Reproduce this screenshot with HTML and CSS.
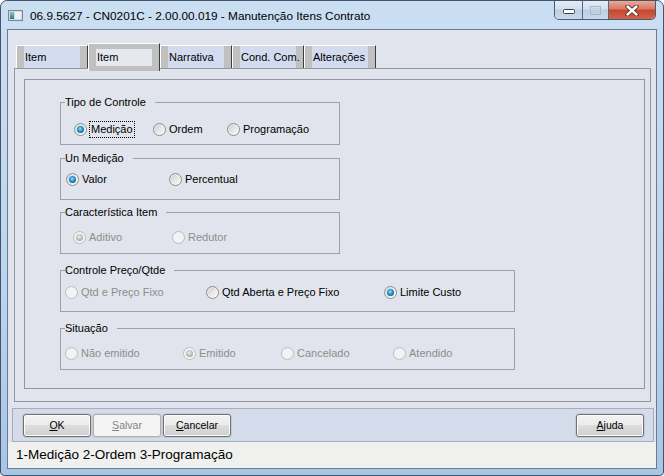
FILE: index.html
```html
<!DOCTYPE html>
<html lang="pt">
<head>
  <meta charset="UTF-8">
  <title>Manutenção Itens Contrato</title>
  <link rel="stylesheet" href="styles.css">
</head>
<body>
  <div class="window">
    <div class="titlebar">
      <svg class="app-icon" width="16" height="16" viewBox="0 0 16 16">
        <defs>
          <linearGradient id="teal" x1="0" y1="0" x2="0" y2="1">
            <stop offset="0" stop-color="#7fd0b8"/>
            <stop offset="1" stop-color="#1f7f86"/>
          </linearGradient>
        </defs>
        <rect x="0.5" y="2.5" width="14" height="10" fill="#d4d8dd" stroke="#7d8793"/>
        <rect x="2" y="4" width="4" height="7" fill="url(#teal)"/>
        <rect x="7" y="4" width="6" height="7" fill="#eef0f2"/>
      </svg>
      <span class="title">06.9.5627 - CN0201C - 2.00.00.019 - Manutenção Itens Contrato</span>
      <div class="caption">
        <span class="cap cap-min">
          <svg width="12" height="5" viewBox="0 0 12 5"><rect x="0.5" y="0.5" width="11" height="4" rx="1" fill="#fff" stroke="#33404f"/></svg>
        </span>
        <span class="cap cap-max">
          <svg width="11" height="9" viewBox="0 0 11 9"><rect x="0.5" y="0.5" width="10" height="8" fill="none" stroke="#a7b6c8"/><rect x="2.5" y="2.5" width="6" height="4" fill="none" stroke="#c3cfdc"/></svg>
        </span>
        <span class="cap cap-close">
          <svg width="14" height="11" viewBox="0 0 14 11">
            <path d="M2.5 1.5 L11.5 9.5 M11.5 1.5 L2.5 9.5" stroke="#4a2a24" stroke-width="4.2" stroke-linecap="round"/>
            <path d="M2.5 1.5 L11.5 9.5 M11.5 1.5 L2.5 9.5" stroke="#fff" stroke-width="2.4" stroke-linecap="round"/>
          </svg>
        </span>
      </div>
    </div>

    <div class="client">
      <div class="tabs">
        <div class="tab">Item</div>
        <div class="tab active">Item</div>
        <div class="tab">Narrativa</div>
        <div class="tab">Cond. Com.</div>
        <div class="tab">Alterações</div>
      </div>

      <div class="panel">
        <div class="page">
          <fieldset class="group g-tipo">
            <legend>Tipo de Controle</legend>
            <div class="options">
              <label class="opt"><span class="radio checked"></span><span class="focus">Medição</span></label>
              <label class="opt"><span class="radio"></span>Ordem</label>
              <label class="opt"><span class="radio"></span>Programação</label>
            </div>
          </fieldset>

          <fieldset class="group g-medicao">
            <legend>Un Medição</legend>
            <div class="options">
              <label class="opt"><span class="radio checked"></span>Valor</label>
              <label class="opt"><span class="radio"></span>Percentual</label>
            </div>
          </fieldset>

          <fieldset class="group g-carac">
            <legend>Característica Item</legend>
            <div class="options">
              <label class="opt disabled"><span class="radio checked"></span>Aditivo</label>
              <label class="opt disabled"><span class="radio"></span>Redutor</label>
            </div>
          </fieldset>

          <fieldset class="group wide g-preco">
            <legend>Controle Preço/Qtde</legend>
            <div class="options">
              <label class="opt disabled"><span class="radio"></span>Qtd e Preço Fixo</label>
              <label class="opt"><span class="radio"></span>Qtd Aberta e Preço Fixo</label>
              <label class="opt"><span class="radio checked"></span>Limite Custo</label>
            </div>
          </fieldset>

          <fieldset class="group wide g-situacao">
            <legend>Situação</legend>
            <div class="options">
              <label class="opt disabled"><span class="radio"></span>Não emitido</label>
              <label class="opt disabled"><span class="radio checked"></span>Emitido</label>
              <label class="opt disabled"><span class="radio"></span>Cancelado</label>
              <label class="opt disabled"><span class="radio"></span>Atendido</label>
            </div>
          </fieldset>
        </div>
      </div>

      <div class="button-bar">
        <button class="btn"><u>O</u>K</button>
        <button class="btn" disabled><u>S</u>alvar</button>
        <button class="btn"><u>C</u>ancelar</button>
        <button class="btn btn-right"><u>A</u>juda</button>
      </div>

      <div class="status">1-Medição 2-Ordem 3-Programação</div>
    </div>
  </div>
</body>
</html>
```

FILE: styles.css
```css
* {
  box-sizing: border-box;
}

body {
  margin: 0;
  width: 664px;
  height: 476px;
  overflow: hidden;
  font-family: "Liberation Sans", Arial, sans-serif;
  font-size: 11px;
  color: #000;
}

/* window frame */
.window {
  width: 664px;
  height: 476px;
  border: 1px solid #43546a;
  border-radius: 7px 7px 4px 4px;
  background: linear-gradient(#cbdff3, #bed5ee 55%, #a9c5e6);
  display: flex;
  flex-direction: column;
}

.titlebar {
  height: 28px;
  flex-shrink: 0;
  display: flex;
  align-items: flex-start;
}

.app-icon {
  margin: 7px 0 0 7px;
}

.title {
  margin: 8px 0 0 6px;
  font-size: 11.8px;
  line-height: 14px;
  white-space: nowrap;
}

.caption {
  margin-left: auto;
  margin-right: 7px;
  display: flex;
  height: 19px;
  border: 1px solid #4a5b70;
  border-top: none;
  border-radius: 0 0 5px 5px;
  overflow: hidden;
}

.cap {
  display: flex;
  align-items: center;
  justify-content: center;
  height: 100%;
  background: linear-gradient(#e4edf7 0%, #d1deec 45%, #bccee3 50%, #c9d9eb 100%);
}

.cap + .cap {
  border-left: 1px solid #56677c;
}

.cap-min {
  width: 27px;
  padding-top: 3px;
}

.cap-max {
  width: 26px;
}

.cap-close {
  width: 47px;
  background: linear-gradient(#e9a996 0%, #d87862 45%, #c4472d 50%, #d3644a 100%);
}

/* client area */
.client {
  margin: 0 6px;
  height: 440px;
  border: 1px solid #6b7c92;
  background: #e1e4ec;
  display: flex;
  flex-direction: column;
}

.tabs {
  display: flex;
  align-items: flex-end;
  height: 25px;
  margin: 13px 0 0 8px;
}

.tab {
  width: 72px;
  height: 23px;
  padding: 0 0 0 8px;
  border-top: 1px solid #fff;
  border-left: 1px solid #fff;
  border-right: 1px solid #3c3c3c;
  background: #d3dbef;
  box-shadow: inset 7px 0 #c0c0c0, inset -7px 0 #c0c0c0;
  line-height: 22px;
  white-space: nowrap;
}

.tab.active {
  height: 28px;
  margin-bottom: -3px;
  padding-top: 7px;
  position: relative;
  z-index: 1;
  background: #e5e8ef;
  box-shadow: inset 7px 5px #c0c0c0, inset -7px -5px #c0c0c0;
  line-height: 13px;
}

.panel {
  height: 334px;
  margin: 0 5px 0 6px;
  padding: 10px 5px 12px 9px;
  border: 1px solid #8d97a6;
  display: flex;
}

.page {
  flex: 1;
  padding: 16px 0 0 35px;
  border: 1px solid #8d97a6;
  display: flex;
  flex-direction: column;
  align-items: flex-start;
}

/* group boxes */
.group {
  width: 280px;
  min-width: 0;
  margin: 0;
  padding: 0;
  border: 1px solid #9aa2ae;
}

.group.wide {
  width: 455px;
}

.group legend {
  margin-left: 4px;
  padding: 0 9px 0 0;
  line-height: 13px;
}

.options {
  display: grid;
}

.g-tipo .options {
  padding: 14px 0 8px 13px;
  grid-template-columns: 79px 74px auto;
}

.g-medicao {
  margin-top: 7px;
}

.g-medicao .options {
  padding: 8px 0 13px 5px;
  grid-template-columns: 103px auto;
}

.g-carac {
  margin-top: 6px;
}

.g-carac .options {
  padding: 12px 0 9px 12px;
  grid-template-columns: 99px auto;
}

.g-preco {
  margin-top: 10px;
}

.g-preco .options {
  padding: 9px 0 12px 4px;
  grid-template-columns: 141px 178px auto;
}

.g-situacao {
  margin-top: 10px;
}

.g-situacao .options {
  padding: 12px 0 9px 4px;
  grid-template-columns: 118px 98px 112px auto;
}

.opt {
  display: flex;
  align-items: center;
  gap: 3px;
  height: 13px;
  line-height: 13px;
  white-space: nowrap;
}

.opt.disabled {
  color: #8d8d8d;
}

.radio {
  width: 13px;
  height: 13px;
  flex-shrink: 0;
  border-radius: 50%;
  border: 1px solid #8b8d90;
  background: linear-gradient(135deg, #c9c9c9 0%, #e6e6e6 50%, #fcfcfc 100%);
  box-shadow: inset 0 0 0 1px rgba(255, 255, 255, 0.5);
  display: flex;
  align-items: center;
  justify-content: center;
}

.radio.checked::after {
  content: "";
  width: 7px;
  height: 7px;
  border-radius: 50%;
  background: radial-gradient(circle at 45% 40%, #9be4fb 0, #2c96d7 40%, #0f5b96 80%, #0b3d66 100%);
}

.disabled .radio {
  border-color: #b9bbbe;
  background: #f3f3f3;
  box-shadow: none;
}

.disabled .radio.checked::after {
  background: radial-gradient(circle at 45% 40%, #eeeeee 0, #b8b8b8 55%, #8e8e8e 100%);
}

.focus {
  padding: 1px;
  outline: 1px dotted #000;
}

/* buttons */
.button-bar {
  height: 34px;
  margin: 6px 2px 0 4px;
  padding: 5px 9px 0 10px;
  border: 1px solid #a4aebd;
  background: #d4dcec;
  display: flex;
  align-items: flex-start;
  gap: 2px;
}

.btn {
  width: 68px;
  height: 23px;
  padding: 0;
  border: 1px solid #707070;
  border-radius: 3px;
  background: linear-gradient(#f2f2f2 0%, #ebebeb 49%, #dddddd 50%, #cfcfcf 100%);
  box-shadow: inset 0 0 0 1px #fcfcfc, 0 0 0 1px #c6cad1;
  font-family: "Liberation Sans", sans-serif;
  font-size: 10.5px;
  line-height: 21px;
  color: #000;
}

.btn:disabled {
  border-color: #adb2b5;
  background: #f4f4f4;
  box-shadow: 0 0 0 1px #c6cad1;
  color: #838383;
}

.btn-right {
  margin-left: auto;
}

.status {
  height: 26px;
  padding-left: 8px;
  background: #f0f0ef;
  font-size: 13.5px;
  line-height: 26px;
}
```
